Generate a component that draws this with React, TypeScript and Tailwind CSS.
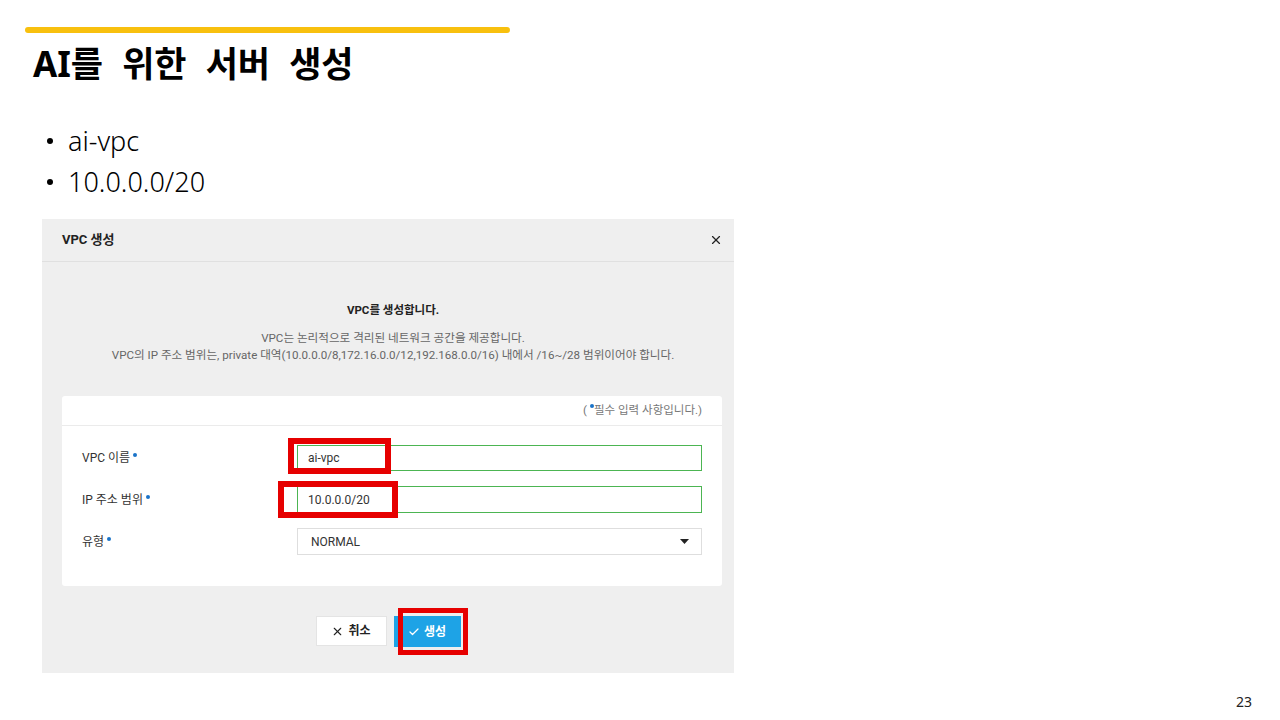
import { Check, X } from 'lucide-react';

const slideFont = { fontFamily: '"Noto Sans", "Noto Sans CJK KR", sans-serif' };

function Dot() {
  return <span className="inline-block w-[4px] h-[4px] rounded-full bg-[#1a73c8] ml-[3px] -translate-y-[5px]" />;
}

function Field({ label, children }: { label: string; children: React.ReactNode }) {
  return (
    <div className="flex items-center">
      <div className="w-[215px] text-[12px] text-[#333]">
        {label}
        <Dot />
      </div>
      <div className="flex-1">{children}</div>
    </div>
  );
}

function VpcDialog() {
  return (
    <div
      className="relative ml-[42px] w-[692px] h-[454px] bg-[#efefef] flex flex-col"
      style={{ fontFamily: 'Roboto, "Noto Sans CJK KR", sans-serif' }}
    >
      <div className="h-[43px] flex items-center justify-between pl-[20px] pr-[11px] border-b border-[#e0e0e0]">
        <span className="text-[13px] font-bold text-[#222]">VPC 생성</span>
        <X className="w-[14px] h-[14px] text-[#222]" strokeWidth={2} />
      </div>

      <div className="flex flex-col items-center mt-[40px] pl-[10px] text-center">
        <div className="text-[11.5px] font-bold text-[#222] leading-[17px]">VPC를 생성합니다.</div>
        <div className="mt-[11px] text-[11.6px] text-[#666] leading-[17px]">
          VPC는 논리적으로 격리된 네트워크 공간을 제공합니다.
          <br />
          VPC의 IP 주소 범위는, private 대역(10.0.0.0/8,172.16.0.0/12,192.168.0.0/16) 내에서 /16~/28 범위이어야 합니다.
        </div>
      </div>

      <div className="ml-[20px] mr-[12px] mt-[32px] h-[190px] bg-white rounded-[3px] flex flex-col">
        <div className="h-[30px] border-b border-[#ebebeb] flex items-center justify-end pr-[20px] text-[11.5px] text-[#777]">
          (<Dot />필수 입력 사항입니다.)
        </div>
        <div className="flex flex-col gap-[15px] pl-[20px] pr-[20px] pt-[19px]">
          <Field label="VPC 이름">
            <div className="h-[26px] border border-[#4cb552] flex items-center px-[10px] text-[12px] text-[#333]">ai-vpc</div>
          </Field>
          <Field label="IP 주소 범위">
            <div className="h-[27px] border border-[#4cb552] flex items-center px-[10px] text-[12px] text-[#333]">10.0.0.0/20</div>
          </Field>
          <Field label="유형">
            <div className="h-[27px] border border-[#dedede] flex items-center justify-between pl-[13px] pr-[12px] text-[12px] text-[#333]">
              <span>NORMAL</span>
              <svg width="9" height="5" viewBox="0 0 9 5">
                <path d="M0 0 L9 0 L4.5 5 Z" fill="#222" />
              </svg>
            </div>
          </Field>
        </div>
      </div>

      <div className="flex justify-center gap-[7px] mt-[30px]">
        <div className="w-[71px] h-[30px] bg-white border border-[#e4e4e4] flex items-center justify-center gap-[4px] text-[12px] font-bold text-[#222]">
          <X className="w-[13px] h-[13px]" strokeWidth={2} />
          취소
        </div>
        <div className="w-[67px] h-[31px] bg-[#1ea3e6] flex items-center justify-center gap-[4px] text-[12px] font-bold text-white">
          <Check className="w-[12px] h-[12px]" strokeWidth={2.5} />
          생성
        </div>
      </div>

      {/* red highlight boxes */}
      <div className="absolute left-[246px] top-[219px] w-[103px] h-[36px] border-[6px] border-[#e60000]" />
      <div className="absolute left-[236px] top-[262px] w-[120px] h-[37px] border-[6px] border-[#e60000]" />
      <div className="absolute left-[356px] top-[389px] w-[70px] h-[47px] border-[5px] border-[#e60000]" />
    </div>
  );
}

export default function App() {
  return (
    <div className="w-[1280px] h-[720px] bg-white flex flex-col overflow-hidden text-black" style={slideFont}>
      <div className="ml-[25px] mt-[27px] w-[485px] h-[6px] rounded-full bg-[#f8c00e]" />
      <h1 className="ml-[33px] mt-[10px] text-[35px] font-bold leading-[42px] [word-spacing:10px]">AI를 위한 서버 생성</h1>
      <ul className="ml-[47px] mt-[35px] text-[27px] leading-[41px] font-light">
        <li className="flex items-center">
          <span className="w-[6px] h-[6px] rounded-full bg-black mr-[15px]" />ai-vpc
        </li>
        <li className="flex items-center">
          <span className="w-[6px] h-[6px] rounded-full bg-black mr-[15px]" />10.0.0.0/20
        </li>
      </ul>
      <div className="mt-[17px]">
        <VpcDialog />
      </div>
      <div className="flex justify-end pr-[28px] mt-[18px] text-[14px] text-[#222]">23</div>
    </div>
  );
}
